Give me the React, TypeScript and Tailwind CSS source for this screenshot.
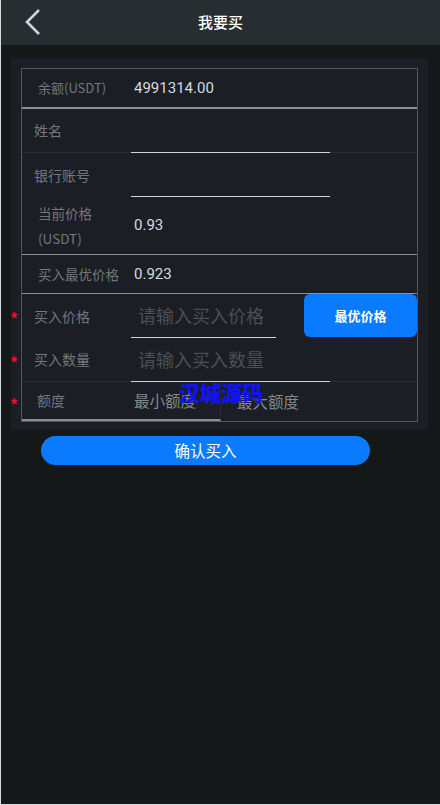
import React from 'react';

const font = { fontFamily: '"Noto Sans CJK SC", "Noto Sans", sans-serif' };

const Star = () => (
  <span className="absolute left-[-12px] top-1/2 -translate-y-[35%] text-[16px] font-bold leading-none text-[#e8102a]">*</span>
);

const App: React.FC = () => {
  return (
    <div
      className="w-[440px] h-[805px] bg-[#141819] border-l border-b border-[#d9d9d9] overflow-hidden"
      style={font}
    >
      {/* Header */}
      <div className="relative flex items-center justify-center h-[45px] bg-[#272e31]">
        <button className="absolute left-[22px] top-[8px] w-[20px] h-[28px]">
          <svg viewBox="0 0 20 28" className="w-[20px] h-[28px]">
            <polyline points="16,2 4,14 16,26" fill="none" stroke="#cdd3d8" strokeWidth="2.6" />
          </svg>
        </button>
        <h1 className="text-[15px] font-medium text-white">我要买</h1>
      </div>

      {/* Form Card */}
      <div className="mt-[13px] ml-[10px] mr-[12px] pt-[10px] pb-[8px] px-[10px] bg-[#1b1e25]">
        <div className="border border-[#53575d]">
          {/* Balance */}
          <div className="flex items-center h-[40px] border-b-2 border-[#8d8f93]">
            <span className="w-[112px] pl-[16px] text-[13px] text-[#74777c]">余额(USDT)</span>
            <span className="text-[15px] text-[#d5dae0]" style={{ fontFamily: 'Roboto, sans-serif' }}>4991314.00</span>
          </div>

          {/* Name */}
          <div className="flex h-[44px] border-b border-[#2a2e35]">
            <span className="flex items-center w-[109px] pl-[12px] text-[14px] text-[#74777c]">姓名</span>
            <input className="w-[199px] -mb-px bg-transparent border-b border-[#d2d2d2] outline-none text-[15px] text-[#d5dae0]" />
          </div>

          {/* Bank account */}
          <div className="flex h-[44px]">
            <span className="flex items-center w-[109px] pl-[12px] text-[14px] text-[#74777c]">银行账号</span>
            <input className="w-[199px] bg-transparent border-b border-[#d2d2d2] outline-none text-[15px] text-[#d5dae0]" />
          </div>

          {/* Current price */}
          <div className="flex items-center h-[58px] border-b border-[#8d8f93]">
            <span className="w-[112px] pl-[16px] text-[13.5px] leading-[25px] text-[#74777c]">
              当前价格
              <br />
              (USDT)
            </span>
            <span className="text-[15px] text-[#d5dae0]" style={{ fontFamily: 'Roboto, sans-serif' }}>0.93</span>
          </div>

          {/* Best price */}
          <div className="flex items-center h-[39px] border-b border-[#8d8f93]">
            <span className="w-[112px] pl-[16px] text-[13.5px] text-[#74777c]">买入最优价格</span>
            <span className="text-[15px] text-[#d5dae0]" style={{ fontFamily: 'Roboto, sans-serif' }}>0.923</span>
          </div>

          {/* Buy price */}
          <div className="relative flex h-[44px]">
            <Star />
            <span className="flex items-center w-[109px] pl-[12px] text-[14px] text-[#74777c]">买入价格</span>
            <input
              placeholder="请输入买入价格"
              className="w-[145px] pl-[7px] bg-transparent border-b border-[#d2d2d2] outline-none text-[18px] text-[#d5dae0] placeholder:text-[#4b4f56]"
            />
            <button className="ml-auto w-[113px] h-[43px] rounded-[6px] bg-[#0a7aff] text-[13px] font-semibold text-white">
              最优价格
            </button>
          </div>

          {/* Buy amount */}
          <div className="relative flex h-[44px] border-b border-[#2a2e35]">
            <Star />
            <span className="flex items-center w-[109px] pl-[12px] text-[14px] text-[#74777c]">买入数量</span>
            <input
              placeholder="请输入买入数量"
              className="w-[199px] -mb-px pl-[7px] bg-transparent border-b border-[#d2d2d2] outline-none text-[18px] text-[#d5dae0] placeholder:text-[#4b4f56]"
            />
          </div>

          {/* Limit */}
          <div className="relative flex h-[39px]">
            <Star />
            <div className="flex items-center w-[199px] border-b-2 border-[#8e8e8e] border-r border-r-[#2a2e35]">
              <span className="w-[112px] pl-[15px] text-[14px] text-[#74777c]">额度</span>
              <span className="text-[15.5px] text-[#85888d]">最小额度</span>
            </div>
            <div className="flex items-center pl-[16px]">
              <span className="text-[15.5px] text-[#85888d]">最大额度</span>
            </div>
            <span className="absolute left-[157px] top-[0px] text-[21px] font-black leading-none text-[#1212ff]">汉城源码</span>
          </div>
        </div>
      </div>

      {/* Confirm */}
      <div className="pt-[6px] pl-[40px]">
        <button className="w-[329px] h-[29px] rounded-full bg-[#0a7aff] text-[15.5px] text-white">
          确认买入
        </button>
      </div>
    </div>
  );
};

export default App;
